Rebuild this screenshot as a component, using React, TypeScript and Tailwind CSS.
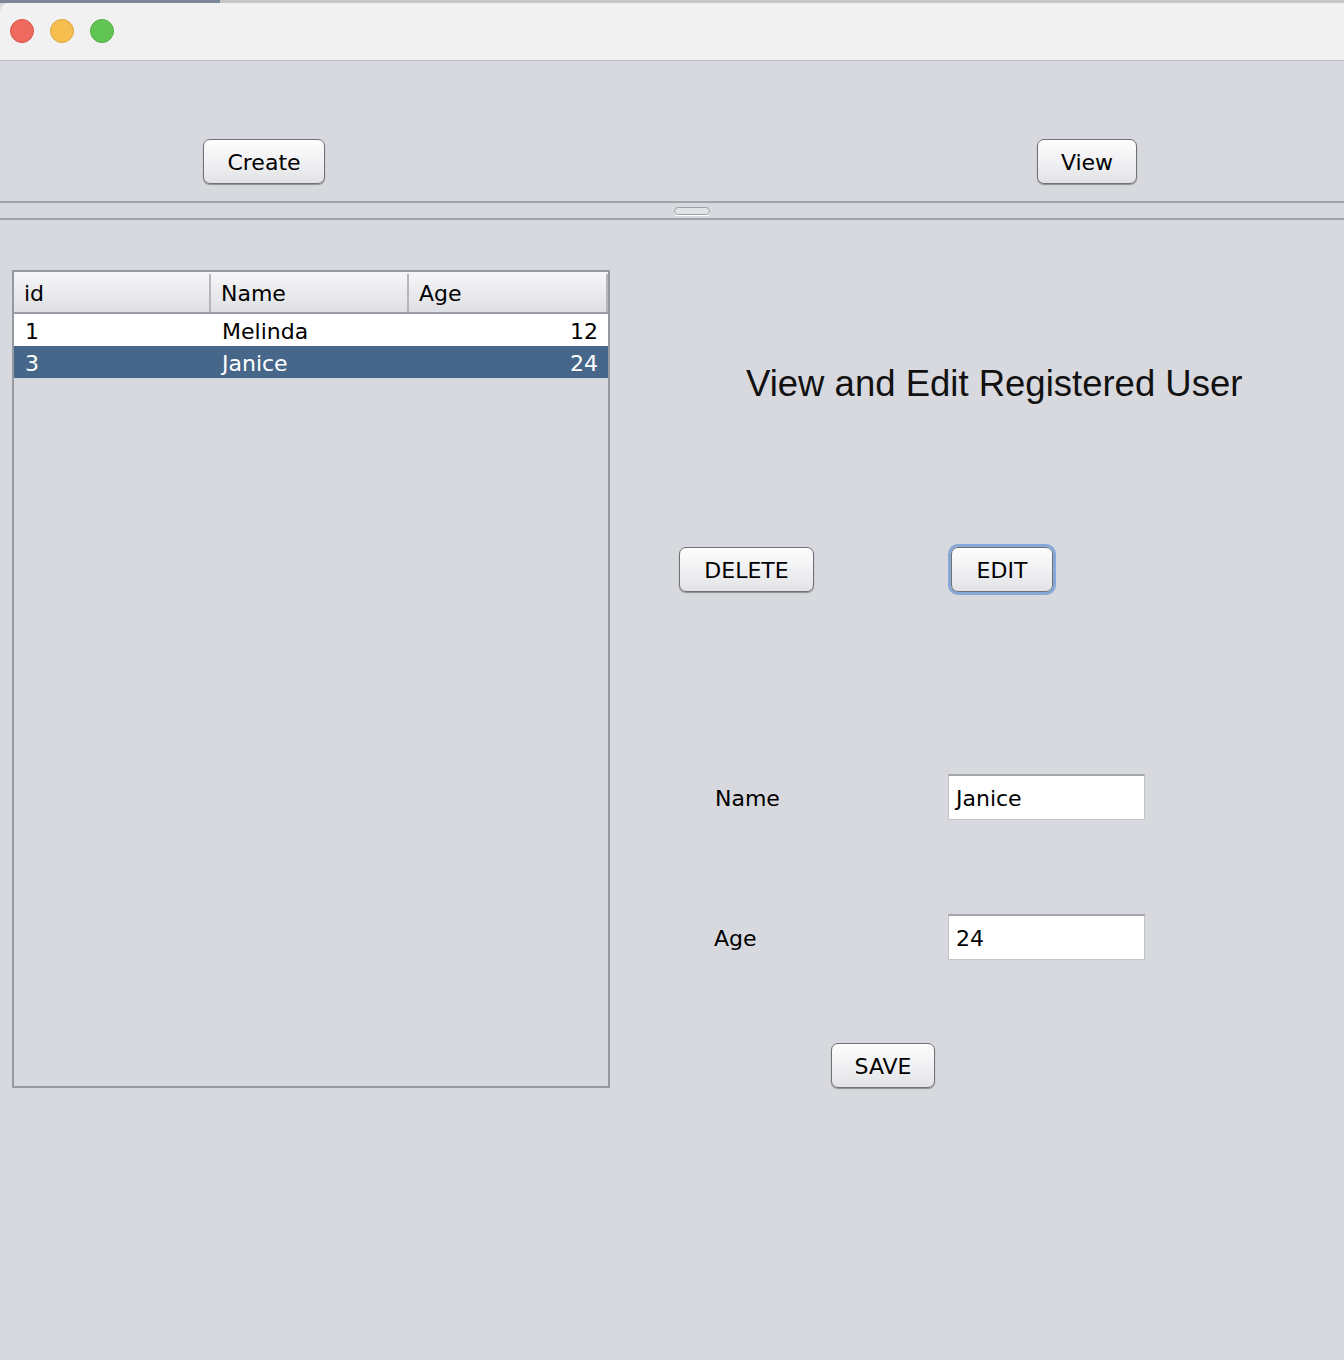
import React from "react";

const font = { fontFamily: '"DejaVu Sans", "Liberation Sans", sans-serif' };

function AquaButton({ children, className = "", focused = false }: { children: React.ReactNode; className?: string; focused?: boolean }) {
  return (
    <div
      className={
        "flex items-center justify-center rounded-[7px] border border-[#6f7074] bg-gradient-to-b from-[#fdfdfd] via-[#f1f1f3] to-[#e2e3e6] text-[22px] text-black shadow-[0_1px_1px_rgba(0,0,0,0.35)] pt-[2px] " +
        (focused ? "outline outline-[3px] outline-[#86a8d6] " : "") +
        className
      }
    >
      {children}
    </div>
  );
}

export default function App() {
  return (
    <div className="w-[1344px] h-[1360px] bg-[#d8d9de] overflow-hidden" style={font}>
      {/* desktop strip */}
      <div className="h-[3px] flex">
        <div className="w-[220px] bg-[#7b8799]" />
        <div className="flex-1 bg-[#c9c7c5]" />
      </div>
      {/* title bar */}
      <div className="h-[59px] bg-[#f0f1f0] border-b border-[#b9babc] rounded-tl-[10px] flex items-center gap-[16px] pl-[10px] -mt-[1px]">
        <div className="w-[24px] h-[24px] rounded-full bg-[#ee6a5f] border border-[#d9554b]" />
        <div className="w-[24px] h-[24px] rounded-full bg-[#f5be4f] border border-[#dfa53a]" />
        <div className="w-[24px] h-[24px] rounded-full bg-[#61c554] border border-[#4fae42]" />
      </div>
      {/* top panel */}
      <div className="h-[140px] flex items-start pt-[78px]">
        <AquaButton className="ml-[203px] w-[122px] h-[45px]">Create</AquaButton>
        <AquaButton className="ml-[712px] w-[100px] h-[45px]">View</AquaButton>
      </div>
      {/* divider */}
      <div className="h-[19px] border-t-[2px] border-b-[2px] border-[#a1a3a8] flex items-center justify-center">
        <div className="w-[36px] h-[8px] rounded-full border border-[#9ea1a6] bg-[#e2e3e6] shadow-[0_1px_0_#ffffff] ml-[40px]" />
      </div>
      {/* bottom panel */}
      <div className="flex">
        {/* table */}
        <div className="ml-[12px] mt-[50px] w-[598px] h-[818px] border-2 border-[#939aa2] bg-[#d8d9de] text-[22px]">
          <div className="flex h-[42px] bg-gradient-to-b from-[#f6f6f8] to-[#dfe0e4] border-b-2 border-[#9a9da3] pt-[2px]">
            <div className="w-[197px] border-r-2 border-[#b4b6ba] pl-[10px] flex items-center">id</div>
            <div className="w-[198px] border-r-2 border-[#b4b6ba] pl-[10px] flex items-center">Name</div>
            <div className="flex-1 pl-[10px] flex items-center border-r-2 border-[#b4b6ba]">Age</div>
          </div>
          <div className="flex h-[32px] bg-white items-center pt-[2px]">
            <div className="w-[197px] pl-[11px]">1</div>
            <div className="w-[198px] pl-[11px]">Melinda</div>
            <div className="flex-1 text-right pr-[10px]">12</div>
          </div>
          <div className="flex h-[32px] bg-[#46678a] text-white items-center pt-[2px]">
            <div className="w-[197px] pl-[11px]">3</div>
            <div className="w-[198px] pl-[11px]">Janice</div>
            <div className="flex-1 text-right pr-[10px]">24</div>
          </div>
        </div>
        {/* right side */}
        <div className="flex flex-col">
          <div className="ml-[136px] mt-[142px] text-[36.5px] leading-[44px] text-[#111]" style={{ fontFamily: '"Liberation Sans", Arial, sans-serif' }}>
            View and Edit Registered User
          </div>
          <div className="flex mt-[141px]">
            <AquaButton className="ml-[69px] w-[135px] h-[45px]">DELETE</AquaButton>
            <AquaButton focused className="ml-[137px] w-[102px] h-[45px]">EDIT</AquaButton>
          </div>
          <div className="flex items-center mt-[182px] h-[46px]">
            <div className="ml-[105px] w-[233px] text-[22px] pt-[2px]">Name</div>
            <div className="w-[197px] h-[46px] bg-white border border-[#c3c4c7] border-t-2 border-t-[#a4a5a8] flex items-center pl-[7px] text-[22px] pt-[2px]">Janice</div>
          </div>
          <div className="flex items-center mt-[94px] h-[46px]">
            <div className="ml-[104px] w-[234px] text-[22px] pt-[2px]">Age</div>
            <div className="w-[197px] h-[46px] bg-white border border-[#c3c4c7] border-t-2 border-t-[#a4a5a8] flex items-center pl-[7px] text-[22px] pt-[2px]">24</div>
          </div>
          <AquaButton className="ml-[221px] mt-[83px] w-[104px] h-[45px]">SAVE</AquaButton>
        </div>
      </div>
    </div>
  );
}
